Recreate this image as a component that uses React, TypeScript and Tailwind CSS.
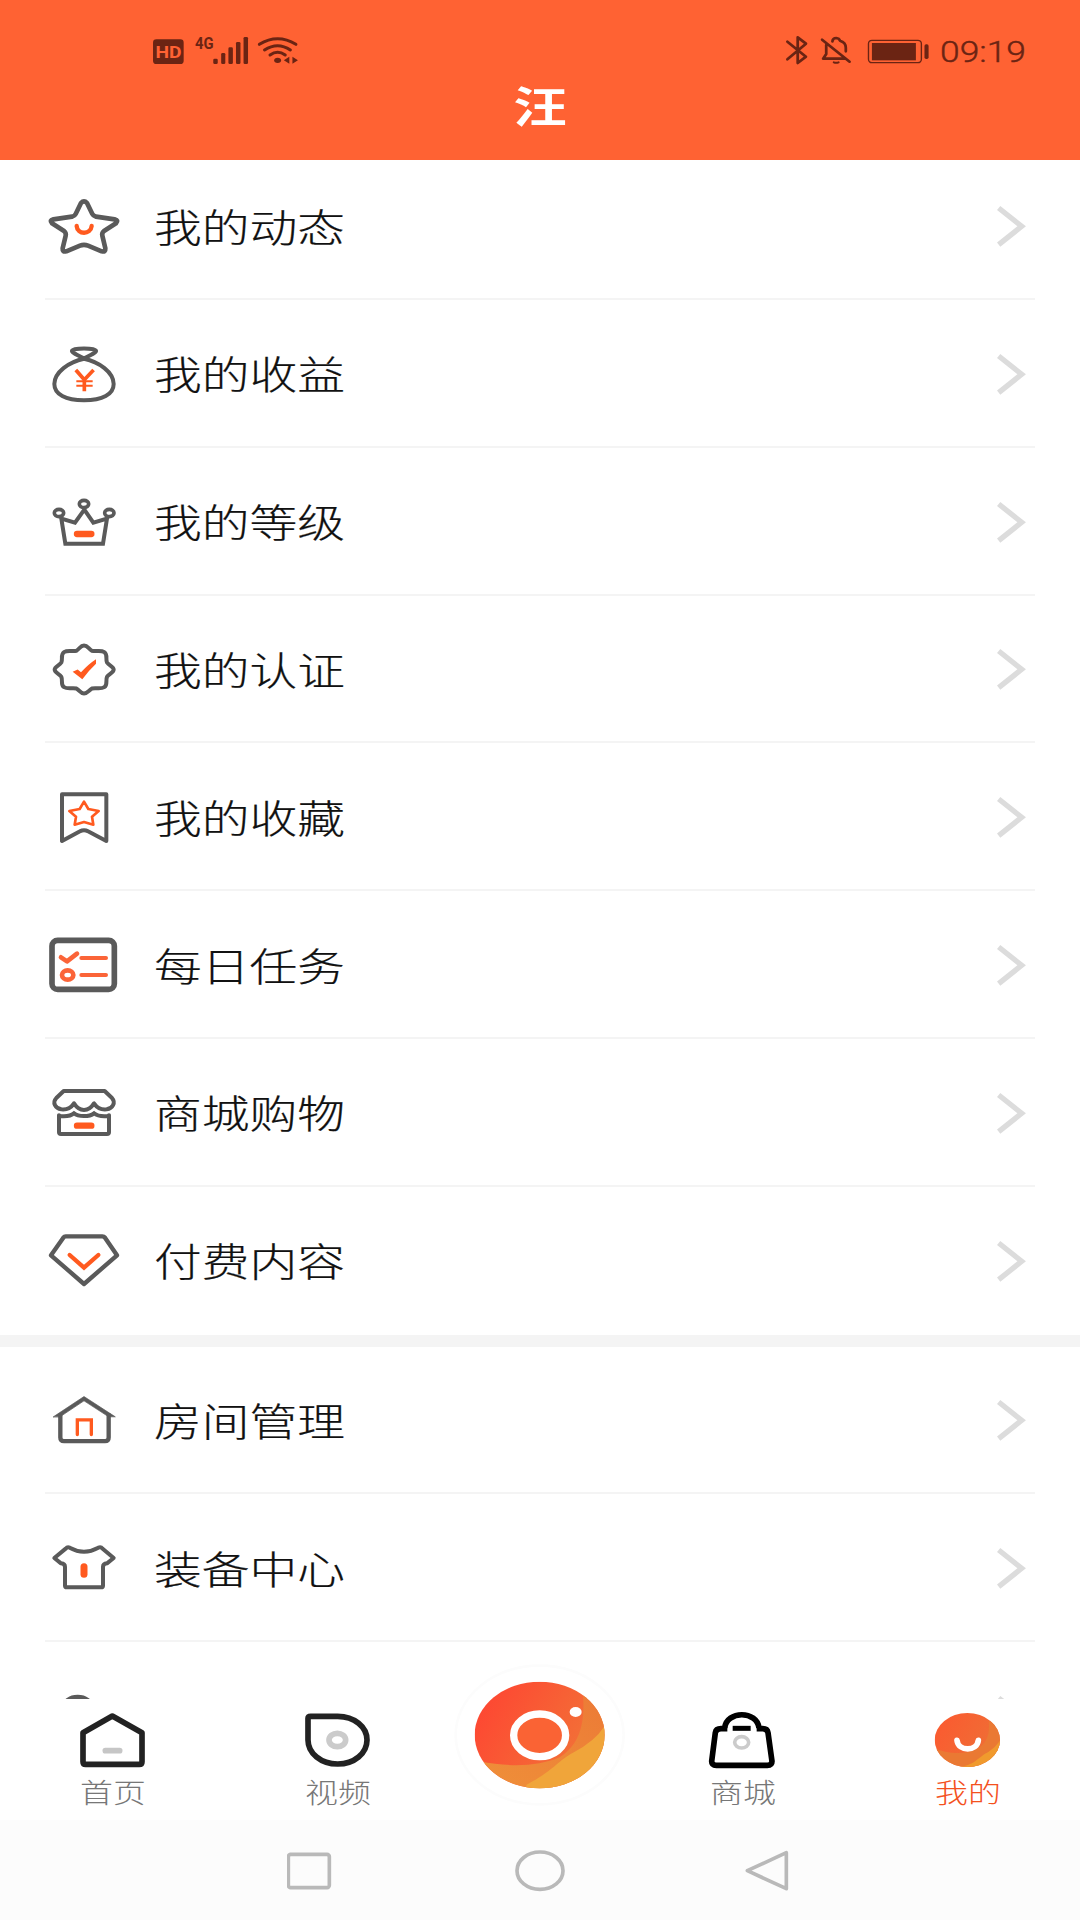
import React from "react";

const GREY = "#5a5a5a";
const ORANGE = "#ff5a1f";
const STATUS = "#6b2413";

interface IconProps {
  viewBox: string;
  children: React.ReactNode;
}

const MenuIcon: React.FC<IconProps> = ({ viewBox, children }) => (
  <svg
    className="w-[78px] h-[60px] shrink-0"
    viewBox={viewBox}
    fill="none"
    stroke={GREY}
    strokeWidth={13}
    strokeLinejoin="round"
    strokeLinecap="round"
  >
    {children}
  </svg>
);

const TabIcon: React.FC<IconProps> = ({ viewBox, children }) => (
  <svg
    className="w-[80px] h-[64px]"
    viewBox={viewBox}
    fill="none"
    stroke="#222222"
    strokeWidth={17}
    strokeLinejoin="round"
    strokeLinecap="round"
  >
    {children}
  </svg>
);

const StarIcon = () => (
  <MenuIcon viewBox="45 77 234 180">
    <path d="M153 98Q162 88 171 98L187 131Q190 137 198 139L254 147Q267 150 258 159L222 182Q215 188 217 196L226 234Q227 246 215 243L174 226Q162 221 150 226L109 243Q97 246 98 234L107 196Q109 188 102 182L66 159Q57 150 70 147L126 139Q134 137 137 131Z" strokeWidth={14} />
    <path d="M140 167C142 194 182 194 185 167" stroke={ORANGE} />
  </MenuIcon>
);

const MoneyBagIcon = () => (
  <MenuIcon viewBox="45 521 234 180">
    <path d="M162 564C140 553 124 546 126 541C130 532 194 532 198 541C200 546 184 553 162 564Z" strokeWidth={12} />
    <path d="M162 565C117 574 73 606 73 641C73 672 107 690 162 690C217 690 251 672 251 641C251 606 207 574 162 565Z" strokeWidth={12} />
    <path d="M141 603L163 628L187 603M163 630V657" stroke={ORANGE} strokeWidth={11} strokeLinecap="square" />
    <path d="M142 633H185M142 646H185" stroke={ORANGE} strokeWidth={6} strokeLinecap="square" />
  </MenuIcon>
);

const CrownIcon = () => (
  <MenuIcon viewBox="45 95 234 180">
    <path d="M94 175L106 250H219L231 175L190 187L163 148L135 187Z" strokeWidth={12} strokeLinejoin="miter" />
    <ellipse cx={87} cy={158} rx={14} ry={11} fill="#fff" strokeWidth={11} />
    <ellipse cx={162} cy={131} rx={14} ry={11} fill="#fff" strokeWidth={11} />
    <ellipse cx={238} cy={158} rx={14} ry={11} fill="#fff" strokeWidth={11} />
    <path d="M141 221H184" stroke={ORANGE} strokeWidth={19} />
  </MenuIcon>
);

const BadgeIcon = () => (
  <MenuIcon viewBox="45 537.5 234 180">
    <path d="M139 573C150 566 151 557 162 557C173 557 175 566 186 573C198 576 212 570 223 577C234 584 226 598 231 608C237 617 251 620 251 629C251 639 237 641 231 651C226 662 234 675 223 682C212 689 198 683 186 686C175 692 173 701 162 701C151 701 150 692 139 686C127 683 113 689 102 682C91 675 99 662 94 651C88 641 74 639 74 629C74 620 88 617 94 608C99 598 91 584 102 577C113 570 127 576 139 573Z" strokeWidth={12} />
    <path d="M128 636L143 629L153 637Q176 612 198 598V612Q175 634 157 658Z" fill={ORANGE} stroke="none" />
  </MenuIcon>
);

const BookmarkIcon = () => (
  <MenuIcon viewBox="45 81 234 180">
    <path d="M96 103H229V243L174 214Q162 207 150 214L96 243Z" strokeWidth={12} />
    <path d="M162 125L175 147L206 153L186 170L190 194L162 186L134 194L138 170L118 153L149 147Z" stroke={ORANGE} strokeWidth={8} />
  </MenuIcon>
);

const TaskIcon = () => (
  <MenuIcon viewBox="45 525 234 180">
    <rect x={66} y={541} width={187} height={147} rx={17} strokeWidth={17} />
    <g stroke="#fb6438" strokeWidth={12}>
      <path d="M93 592L111 604L141 581" strokeWidth={14} />
      <path d="M154 594H228M154 645H228" />
      <ellipse cx={113} cy={645} rx={17} ry={14} strokeWidth={14} />
    </g>
  </MenuIcon>
);

const ShopIcon = () => (
  <MenuIcon viewBox="45 69 234 180">
    <path d="M101 93H224L246 114C258 128 248 145 230 148C212 150 200 142 192 130C183 145 172 150 162 150C151 150 141 145 132 130C124 142 112 150 94 148C76 145 66 128 79 114Z" strokeWidth={12} />
    <path d="M87 166V217Q87 222 93 222H231Q237 222 237 217V166" strokeWidth={12} />
    <path d="M87 168C103 170 121 170 132 160C145 171 178 171 192 160C204 170 221 170 237 168" strokeWidth={12} strokeLinejoin="miter" />
    <path d="M141 197H184" stroke={ORANGE} strokeWidth={19} />
  </MenuIcon>
);

const DiamondIcon = () => (
  <MenuIcon viewBox="45 513 234 180">
    <path d="M107 529H217Q222 529 225 533L261 586L162 672L63 586L100 533Q103 529 107 529Z" />
    <path d="M119 585L162 623L205 585" stroke={ORANGE} strokeLinejoin="miter" />
  </MenuIcon>
);

const HouseIcon = () => (
  <MenuIcon viewBox="45 211.5 234 180">
    <path d="M91 286V354Q91 365 102 365H225Q236 365 236 354V286" />
    <path d="M70 292L162 231L256 292H236L162 244L90 292Z" fill={GREY} stroke={GREY} strokeWidth={2} />
    <path d="M142 345V301H184V345" stroke={ORANGE} strokeWidth={10} strokeLinejoin="miter" />
  </MenuIcon>
);

const ShirtIcon = () => (
  <MenuIcon viewBox="45 655 234 180">
    <path d="M119 684Q162 708 205 684Q213 681 218 687L251 715L231 731Q219 732 219 742V798Q219 803 213 803H111Q105 803 105 798V742Q105 732 93 731L73 715L107 687Q112 681 119 684Z" strokeWidth={12} />
    <path d="M162 741V764" stroke={ORANGE} strokeWidth={21} />
  </MenuIcon>
);

// only the top edge of this one shows above the tab bar
const HeadIcon = () => (
  <MenuIcon viewBox="45 80 234 180">
    <ellipse cx={143} cy={144} rx={42} ry={31} />
  </MenuIcon>
);

const Chevron = () => (
  <svg className="w-[30px] h-[42px] shrink-0" viewBox="171 76 90 126" fill="none">
    <path d="M179 85L248 140L179 195" stroke="#dcdcdc" strokeWidth={16} />
  </svg>
);

interface MenuItem {
  label: string;
  icon: React.ReactNode;
}

const mainItems: MenuItem[] = [
  { label: "我的动态", icon: <StarIcon /> },
  { label: "我的收益", icon: <MoneyBagIcon /> },
  { label: "我的等级", icon: <CrownIcon /> },
  { label: "我的认证", icon: <BadgeIcon /> },
  { label: "我的收藏", icon: <BookmarkIcon /> },
  { label: "每日任务", icon: <TaskIcon /> },
  { label: "商城购物", icon: <ShopIcon /> },
  { label: "付费内容", icon: <DiamondIcon /> },
];

const roomItems: MenuItem[] = [
  { label: "房间管理", icon: <HouseIcon /> },
  { label: "装备中心", icon: <ShirtIcon /> },
  { label: "", icon: <HeadIcon /> },
];

const MenuList: React.FC<{ items: MenuItem[] }> = ({ items }) => (
  <ul className="px-[45px]">
    {items.map((item, index) => (
      <li
        key={index}
        className="flex items-center h-[147.8px] pt-[2px] pr-[9px] border-b-2 border-[#f4f4f4] last:border-b-0 last:pt-0"
      >
        {item.icon}
        <span className="ml-[31px] -mt-[3px] flex-1 origin-left scale-x-[1.225] text-[39px] leading-[56px] font-light text-[#111111] [-webkit-text-stroke:0.2px_#111111]">
          {item.label}
        </span>
        <Chevron />
      </li>
    ))}
  </ul>
);

const StatusBar = () => (
  <div className="flex items-center justify-between h-[31px] mt-[35px] pl-[152px] pr-[54px]">
    <svg className="w-[148px] h-[31px] overflow-visible" viewBox="440 105 430 93" preserveAspectRatio="none" fill={STATUS}>
      <rect x={443} y={118} width={89} height={74} rx={10} />
      <text x={450} y={173} fontSize={51} fontWeight={700} textLength={76} lengthAdjust="spacingAndGlyphs" fill="#ff6233" fontFamily="Roboto, sans-serif">
        HD
      </text>
      <text x={565} y={147} fontSize={50} fontWeight={700} textLength={54} lengthAdjust="spacingAndGlyphs" fontFamily="Roboto, sans-serif">
        4G
      </text>
      <rect x={618} y={176} width={13} height={16} rx={4} />
      <rect x={641} y={159} width={12} height={33} rx={4} />
      <rect x={662} y={142} width={13} height={50} rx={4} />
      <rect x={684} y={126} width={13} height={66} rx={4} />
      <rect x={706} y={111} width={13} height={81} rx={4} />
      <g fill="none" stroke={STATUS} strokeWidth={9} strokeLinecap="round">
        <path d="M752 133Q805 99 858 133" />
        <path d="M767 150Q805 124 842 150" />
        <path d="M783 165Q805 149 827 165" />
      </g>
      <ellipse cx={805} cy={181} rx={10} ry={8} />
      <path d="M823 181L839 170V191ZM848 170L864 181L848 191Z" />
    </svg>
    <div className="flex items-center">
      <svg className="w-[146px] h-[31px]" viewBox="710 105 425 93" preserveAspectRatio="none" fill="none" stroke={STATUS} strokeWidth={8} strokeLinecap="round" strokeLinejoin="round">
        <path d="M717 125L771 170L747 189V112L771 131L717 178" />
        <path d="M818 119L898 185M830 135V162L821 176H882M848 124Q849 114 859 114Q868 115 870 122Q887 127 887 143V154" />
        <path d="M852 187Q859 190 866 187" strokeWidth={6} />
        <rect x={953} y={121} width={154} height={67} rx={10} strokeWidth={4} />
        <rect x={963} y={129} width={128} height={52} fill={STATUS} stroke="none" />
        <rect x={1116} y={133} width={12} height={44} rx={5} fill={STATUS} stroke="none" />
      </svg>
      <span className="ml-[9px] w-[86px] origin-left scale-x-[1.2] font-[Roboto,sans-serif] font-light text-[29.5px] leading-[31px] text-[#6b2413] [-webkit-text-stroke:0.4px_#6b2413] pt-[4px]">
        09:19
      </span>
    </div>
  </div>
);

const HomeTabIcon = () => (
  <TabIcon viewBox="129 204 240 192">
    <path d="M247 228L336 278V365Q336 373 328 373H167Q159 373 159 365V278Z" />
    <path d="M226 332H269" stroke="#c6c6c6" />
  </TabIcon>
);

const VideoTabIcon = () => (
  <TabIcon viewBox="804 204 240 192">
    <path d="M842 229H923C973 229 1011 261 1011 300C1011 340 973 372 923 372C873 372 834 340 834 300V235Q834 229 842 229Z" />
    <ellipse cx={922} cy={300} rx={25} ry={20} stroke="#cbcbcb" />
  </TabIcon>
);

const MallTabIcon = () => (
  <TabIcon viewBox="819 204 240 192">
    <g stroke="#000">
      <path d="M892 266H873Q858 266 856 278L845 364Q845 376 859 376H1012Q1026 376 1026 364L1014 278Q1012 266 998 266H980" strokeLinecap="butt" />
      <path d="M884 264C889 211 982 211 987 264" strokeLinecap="butt" />
      <path d="M908 265H962" strokeWidth={15} strokeLinecap="butt" />
    </g>
    <ellipse cx={935} cy={307} rx={21} ry={17} stroke="#cbcbcb" strokeWidth={11} />
  </TabIcon>
);

const MineTabIcon = () => (
  <TabIcon viewBox="444 204 240 192">
    <defs>
      <linearGradient id="mine" x1="0" y1="0.2" x2="1" y2="0.7">
        <stop offset="0" stopColor="#fb5a30" />
        <stop offset="1" stopColor="#ed7136" />
      </linearGradient>
      <clipPath id="mineClip">
        <ellipse cx={562} cy={300} rx={98} ry={81} />
      </clipPath>
    </defs>
    <g clipPath="url(#mineClip)" stroke="none">
      <rect x={464} y={219} width={196} height={162} fill="url(#mine)" />
      <path d="M464 324C500 342 550 344 585 330C620 312 630 285 626 244L670 250V390H464Z" fill="#ea7933" />
      <path d="M540 381C590 372 595 350 625 336Q650 320 664 296V390H540Z" fill="#f09a2d" />
    </g>
    <path d="M531 301C535 335 591 335 595 301" stroke="#fff" strokeWidth={17} />
  </TabIcon>
);

const CameraButton = () => (
  <svg className="-mt-[34.7px] w-[173.3px] h-[143.3px]" viewBox="70 69 520 430">
    <defs>
      <linearGradient id="cam" x1="0" y1="0.25" x2="1" y2="0.75">
        <stop offset="0" stopColor="#fe4632" />
        <stop offset="1" stopColor="#f07a38" />
      </linearGradient>
      <linearGradient id="camBand" x1="0" y1="1" x2="1" y2="0">
        <stop offset="0" stopColor="#ef9039" />
        <stop offset="1" stopColor="#ec7a36" />
      </linearGradient>
      <clipPath id="camClip">
        <ellipse cx={330} cy={285} rx={195} ry={160} />
      </clipPath>
    </defs>
    <ellipse cx={330} cy={285} rx={252} ry={208} fill="#fff" stroke="#fcfcfc" strokeWidth={8} />
    <g clipPath="url(#camClip)">
      <rect x={135} y={125} width={390} height={320} fill="url(#cam)" />
      <path d="M150 364C240 382 325 380 390 352C450 315 467 250 460 160L530 160V450H150Z" fill="url(#camBand)" />
      <path d="M290 435C380 385 385 362 430 338Q495 305 525 258V450H290Z" fill="#f0a53a" />
    </g>
    <ellipse cx={330} cy={286} rx={78} ry={64} fill="#fa6334" stroke="#fff" strokeWidth={22} />
    <ellipse cx={438} cy={216} rx={18} ry={15} fill="#fff" />
  </svg>
);

interface TabProps {
  label: string;
  icon: React.ReactNode;
  active?: boolean;
}

const Tab: React.FC<TabProps> = ({ label, icon, active }) => (
  <div className="w-[225px] flex flex-col items-center pt-[10px]">
    {icon}
    <span
      className={`scale-x-[1.22] text-[27px] leading-[39px] font-light ${
        active ? "text-[#f4511e]" : "text-[#777777]"
      }`}
    >
      {label}
    </span>
  </div>
);

const App: React.FC = () => {
  return (
    <div className="w-[1080px] h-[1920px] flex flex-col overflow-hidden bg-white font-['Noto_Sans_CJK_SC',sans-serif]">
      <header className="h-[160px] shrink-0 bg-[#ff6233] flex flex-col">
        <StatusBar />
        <h1 className="mt-[7px] text-center scale-x-[1.25] text-[43px] leading-[62px] font-bold text-white">
          汪
        </h1>
      </header>

      <main className="h-[1539px] shrink-0 overflow-hidden">
        <div className="-mt-[7.8px]">
          <MenuList items={mainItems} />
          <div className="h-[12px] bg-[#f4f4f4]"></div>
          <MenuList items={roomItems} />
        </div>
      </main>

      <nav className="relative -mt-px h-[122px] shrink-0 flex">
        <Tab label="首页" icon={<HomeTabIcon />} />
        <Tab label="视频" icon={<VideoTabIcon />} />
        <div className="w-[180px] flex justify-center items-start">
          <CameraButton />
        </div>
        <Tab label="商城" icon={<MallTabIcon />} />
        <Tab label="我的" icon={<MineTabIcon />} active />
      </nav>

      <footer className="h-[100px] shrink-0 flex items-center justify-center bg-[#fcfcfc]">
        <svg className="w-[506px] h-[44px]" viewBox="9 -2 1518 132" fill="none" stroke="#b9b9b9" strokeWidth={11} strokeLinejoin="round">
          <rect x={13} y={17} width={123} height={100} rx={7} />
          <ellipse cx={768} cy={66} rx={69} ry={56} />
          <path d="M1390 66L1507 12V120Z" />
        </svg>
      </footer>
    </div>
  );
};

export default App;
